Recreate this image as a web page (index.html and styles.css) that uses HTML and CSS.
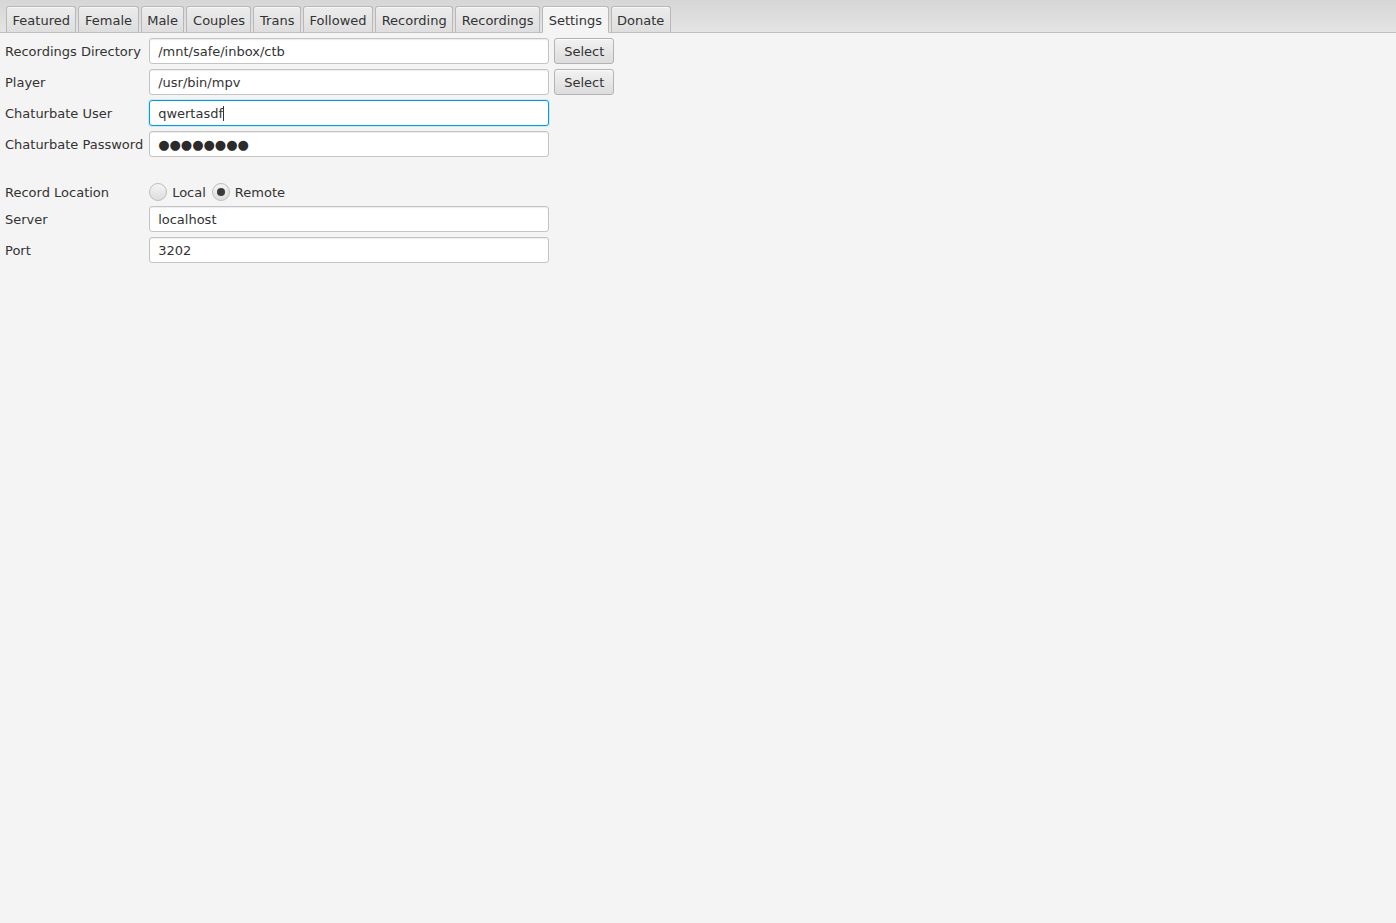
FILE: index.html
```html
<!DOCTYPE html>
<html lang="en">
<head>
    <meta charset="UTF-8">
    <title>Settings</title>
    <link rel="stylesheet" href="styles.css">
</head>
<body>
  <div class="tab-header">
    <div class="tab">Featured</div>
    <div class="tab">Female</div>
    <div class="tab">Male</div>
    <div class="tab">Couples</div>
    <div class="tab">Trans</div>
    <div class="tab">Followed</div>
    <div class="tab">Recording</div>
    <div class="tab">Recordings</div>
    <div class="tab selected">Settings</div>
    <div class="tab">Donate</div>
  </div>

  <div class="settings">
    <label class="label">Recordings Directory</label>
    <div class="field">/mnt/safe/inbox/ctb</div>
    <button class="btn">Select</button>

    <label class="label">Player</label>
    <div class="field">/usr/bin/mpv</div>
    <button class="btn">Select</button>

    <label class="label">Chaturbate User</label>
    <div class="field focused">qwertasdf<span class="caret"></span></div>
    <div></div>

    <label class="label">Chaturbate Password</label>
    <div class="field password">&#9679;&#9679;&#9679;&#9679;&#9679;&#9679;&#9679;&#9679;</div>
    <div></div>

    <div class="spacer"></div>

    <label class="label">Record Location</label>
    <div class="radios">
      <span class="radio"></span><span class="radio-text">Local</span>
      <span class="radio checked"></span><span class="radio-text">Remote</span>
    </div>
    <div></div>

    <label class="label">Server</label>
    <div class="field">localhost</div>
    <div></div>

    <label class="label">Port</label>
    <div class="field">3202</div>
    <div></div>
  </div>
</body>
</html>
```

FILE: styles.css
```css
*{
    margin: 0;
    padding: 0;
    box-sizing: border-box;
}
body{
    background-color: #f4f4f4;
    font-family: "DejaVu Sans", sans-serif;
    font-size: 13px;
    color: #333333;
    height: 923px;
}
.tab-header{
    height: 33px;
    display: flex;
    align-items: flex-end;
    gap: 2px;
    padding-left: 6px;
    background: linear-gradient(to bottom, #d6d6d6, #e4e4e4);
    border-bottom: 1px solid #c0c0c0;
}
.tab{
    height: 27px;
    margin-bottom: -1px;
    padding: 2px 5.5px 0 5.6px;
    display: flex;
    align-items: center;
    border: 1px solid #b8b8b8;
    border-bottom: 1px solid #c0c0c0;
    border-radius: 3px 3px 0 0;
    background: linear-gradient(to bottom, #ececec, #dedede);
    box-shadow: inset 0 1px 0 #f8f8f8;
}
.tab.selected{
    background: #f4f4f4;
    border-bottom-color: #f4f4f4;
    box-shadow: inset 0 1px 0 #ffffff;
}
.settings{
    display: grid;
    grid-template-columns: max-content 400px max-content;
    column-gap: 5px;
    row-gap: 5px;
    align-items: center;
    padding: 5px 0 0 5px;
}
.label{
    padding-right: 1px;
}
.field{
    height: 26px;
    background-color: #ffffff;
    border: 1px solid #c4c4c4;
    border-radius: 3px;
    padding-left: 8px;
    display: flex;
    align-items: center;
    box-shadow: inset 0 1px 1px #ececec;
}
.field.focused{
    border-color: #039ed3;
    box-shadow: 0 0 0 1px #cde9f5;
}
.caret{
    display: inline-block;
    width: 1px;
    height: 15px;
    background-color: #333333;
}
.field.password{
    font-size: 13px;
    color: #2b2b2b;
}
.btn{
    height: 26px;
    padding: 0 9px;
    font-family: inherit;
    font-size: 13px;
    color: #333333;
    border: 1px solid #b3b3b3;
    border-radius: 3px;
    background: linear-gradient(to bottom, #f2f2f2, #dcdcdc);
    box-shadow: inset 0 1px 0 #fbfbfb;
}
.spacer{
    grid-column: 1 / 4;
    height: 16px;
}
.radios{
    display: flex;
    align-items: center;
    height: 18px;
}
.radio{
    width: 18px;
    height: 18px;
    border-radius: 50%;
    border: 1px solid #bdbdbd;
    background: linear-gradient(to bottom, #f4f4f4, #dddddd);
    display: flex;
    align-items: center;
    justify-content: center;
}
.radio.checked::after{
    content: "";
    width: 8px;
    height: 8px;
    border-radius: 50%;
    background-color: #3a3a3a;
}
.radio-text{
    margin: 0 6px 0 5px;
}
```
